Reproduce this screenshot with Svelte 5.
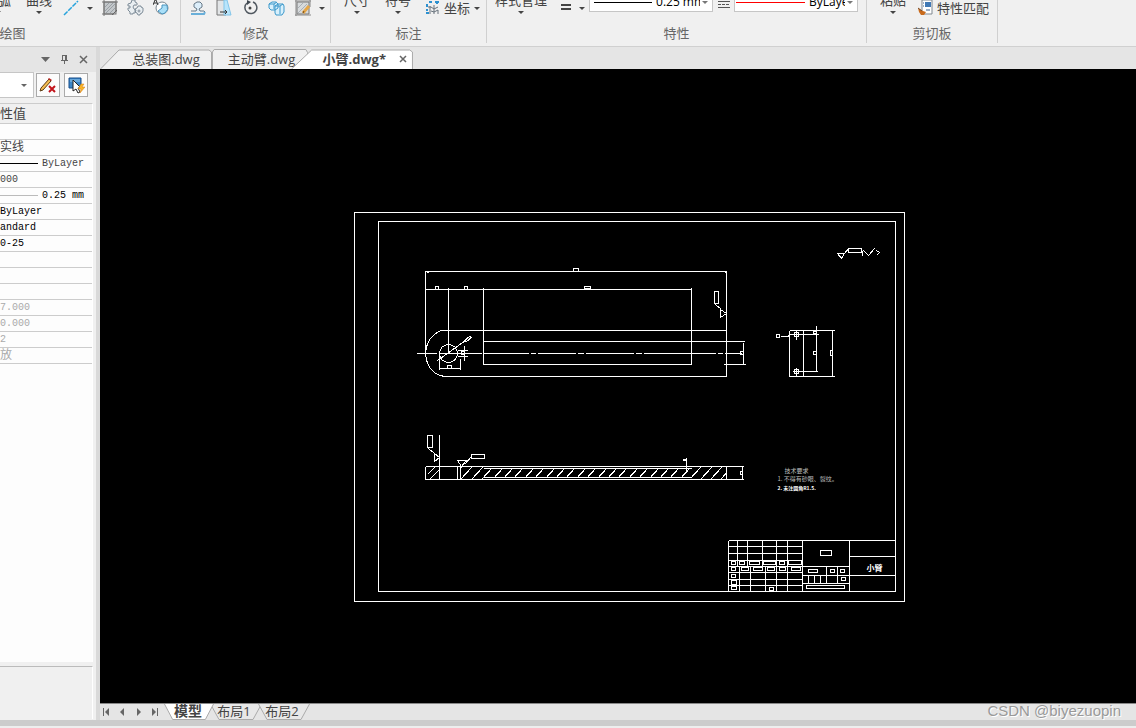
<script lang="ts">
  let activeDoc = $state('小臂.dwg*');
  let activeLayout = $state('模型');
  let lineWeight = $state('0.25 mm');
  let lineType = $state('ByLayer');

  const docs = ['总装图.dwg', '主动臂.dwg', '小臂.dwg*'];
  const layouts = ['模型', '布局1', '布局2'];

  const rows = [
    { value: '' },
    { value: '实线', kind: 'cjk' },
    { value: 'ByLayer', kind: 'line' },
    { value: '000' },
    { value: '0.25 mm', kind: 'line thick' },
    { value: 'ByLayer', kind: 'strong' },
    { value: 'andard', kind: 'strong' },
    { value: '0-25', kind: 'strong' },
    { value: '' },
    { value: '' },
    { value: '' },
    { value: '7.000', kind: 'readonly' },
    { value: '0.000', kind: 'readonly' },
    { value: '2', kind: 'readonly' },
    { value: '放', kind: 'readonly cjk' },
  ];

  // small label boxes: x, y, width, height
  const boxes = [
    [573, 268, 5, 3], [435, 286, 3, 3], [464, 286, 3, 3], [584, 286, 6, 2],
    [447, 365, 4, 3], [461, 351, 3, 3], [740, 351, 3, 3], [714, 291, 4, 12],
    [776, 334, 3, 3], [813, 331, 3, 2], [813, 351, 3, 3], [830, 350, 2, 5],
    [848, 248, 13, 4], [427, 435, 5, 12], [471, 454, 13, 4], [740, 471, 2, 3],
    [683, 459, 3, 1],
    [731, 561, 4, 3], [739, 561, 5, 3], [749, 561, 10, 3], [763, 561, 12, 3],
    [779, 561, 5, 3], [788, 560, 13, 4],
    [731, 567, 4, 3], [741, 567, 7, 3], [753, 567, 9, 3], [767, 567, 7, 3],
    [779, 567, 6, 3], [791, 567, 9, 3],
    [731, 574, 4, 3], [731, 580, 5, 4], [731, 586, 5, 3], [769, 587, 4, 3],
    [820, 550, 11, 5], [808, 569, 9, 3], [830, 569, 4, 3], [840, 569, 4, 3],
    [841, 577, 4, 3], [806, 585, 38, 3],
  ];

  const hatch = Array.from({ length: 27 }, (_, i) => 450 + Math.round(i * 10.4));
</script>

<div class="app">
  <header class="ribbon">
    <section class="group draw">
      <div class="tools">
        <button class="tall">圆弧<i class="caret"></i></button>
        <button class="tall">曲线<i class="caret"></i></button>
        <button class="tool" aria-label="line">
          <svg width="16" height="16" viewBox="0 0 16 16"><path d="M1 15 15 1" stroke="#28a3dc" stroke-width="1.5" stroke-dasharray="5 1" /></svg>
          <i class="caret"></i>
        </button>
        <button class="tool" aria-label="hatch">
          <svg width="16" height="16" viewBox="0 0 16 16">
            <rect x="2" y="2" width="12" height="12" fill="#c3c7ca" stroke="#777" />
            <path d="M3 7 7 3M3 11l8-8M4 13l9-9M8 13l5-5" stroke="#9aa0a5" />
            <path d="M0 2h16M2 0v16M14 0v12M0 14h12" stroke="#777" />
            <path d="m10 15 5-5" stroke="#666" />
          </svg>
        </button>
        <button class="tool" aria-label="block">
          <svg width="17" height="17" viewBox="0 0 17 17">
            <path d="M5 1h3v2l2 1v2H7l-1 2 1 2 2 1-1 3H6v1H3v-2L1 11V9h2V7H1V5l3-1zM11 7h3v1l2 1v3l-1 2-2 1v1h-2l-1-2-2-1v-3l2-1z" fill="#e9eef1" stroke="#7e8c98" />
            <circle cx="12" cy="12" r="1" fill="#fff" stroke="#7e8c98" />
            <path d="m8 7 2-2" stroke="#a8afb5" />
          </svg>
        </button>
        <button class="tool" aria-label="region">
          <svg width="16" height="17" viewBox="0 0 16 17">
            <circle cx="9" cy="9" r="6" fill="#fff" stroke="#7b8790" />
            <path d="M9 9V6h5q2 5-2 8l-3 1-4-3z" fill="#a9dff8" stroke="#4a94bd" />
            <path d="m0 6 2-5h1l2 5M1 4h3" fill="none" stroke="#333" />
          </svg>
        </button>
      </div>
      <h2>绘图</h2>
    </section>

    <section class="group modify">
      <div class="tools">
        <button class="tool" aria-label="stamp">
          <svg width="16" height="16" viewBox="0 0 16 16">
            <path d="M1 11h5l1-2-3-2V4l3-2h3l2 2v3l-3 2 1 2h4l1 1" fill="#dceefa" stroke="#667887" />
            <path d="M1 14h13l1-2" fill="none" stroke="#69afd9" stroke-width="2" />
          </svg>
        </button>
        <button class="tool" aria-label="stretch">
          <svg width="16" height="16" viewBox="0 0 16 16">
            <path d="M1 0v15h9V0z" fill="#e2e5e7" stroke="#777" />
            <path d="M8 0h3l4 15H8z" fill="#b9e5fb" stroke="#82c5e9" />
            <path d="M4 12h7M9 10l2 2-2 2" fill="none" stroke="#333" />
          </svg>
        </button>
        <button class="tool" aria-label="rotate">
          <svg width="16" height="17" viewBox="0 0 16 17">
            <path d="M5 4a6 6 0 1 0 6-1" fill="none" stroke="#505860" stroke-width="1.5" />
            <path d="m5 1 4 2-4 3z" fill="#404850" /><circle cx="8" cy="9" r="1.500" fill="#444" />
          </svg>
        </button>
        <button class="tool" aria-label="array">
          <svg width="17" height="16" viewBox="0 0 17 16" fill="#d8f0fc" stroke="#3b98cb">
            <path d="m1 4 3-2h4l2 2v4l-3 2H3L1 8zM1 4h5v5M6 4l3-2M7 6l3-2h5l1 2v6l-2 3H8l-1-2zM7 6h5l3-2M12 6v8" />
          </svg>
        </button>
        <button class="tool" aria-label="edit hatch">
          <svg width="16" height="16" viewBox="0 0 16 16">
            <path d="M2 2h12v12H2z" fill="#d7dadc" stroke="#777" />
            <path d="m3 8 5-5M3 13l9-9M8 13l5-5" stroke="#aab0b5" />
            <path d="M0 1h16M1 0v16M15 0v7M0 15h16" stroke="#888" />
            <path d="m8 13 6-7" stroke="#e5a647" stroke-width="3" /><path d="m8 13 1-2" stroke="#6c481c" />
          </svg>
          <i class="caret"></i>
        </button>
      </div>
      <h2>修改</h2>
    </section>

    <section class="group annotate">
      <div class="tools">
        <button class="tall">尺寸<i class="caret"></i></button>
        <button class="tall">符号<i class="caret"></i></button>
        <button class="tool text">
          <svg width="14" height="14" viewBox="0 0 14 14">
            <path d="M1 3v3M1 8v2M0 12h3M3 1h3M9 1h4M11 0v3" stroke="#2d91d0" stroke-width="2" />
            <path d="M4 5v8M2 6h3l3 2 4-2M8 4v9M5 10l3 1 4-2v4" fill="none" stroke="#68737c" />
          </svg>
          坐标<i class="caret"></i>
        </button>
      </div>
      <h2>标注</h2>
    </section>

    <section class="group props">
      <div class="tools">
        <button class="tall">样式管理<i class="caret"></i></button>
        <button class="tool weight" aria-label="line weight">
          <svg width="10" height="16" viewBox="0 0 10 16"><path d="M0 5h10M0 9h10" stroke="#444" stroke-width="2" shape-rendering="crispEdges" /></svg>
          <i class="caret"></i>
        </button>
        <div class="combo">
          <span class="sample"></span>
          <select aria-label="线宽" bind:value={lineWeight}><option>0.25 mm</option></select>
          <i class="caret"></i>
        </div>
        <svg class="linetype" width="12" height="16" viewBox="0 0 12 16" shape-rendering="crispEdges">
          <path d="M0 4.500h12M0 10.500h12" stroke="#555" />
          <path d="M0 7.500h12" stroke="#555" stroke-dasharray="3 1" />
          <path d="M0 1.500h12" stroke="#555" stroke-dasharray="2 1" />
        </svg>
        <div class="combo">
          <span class="sample red"></span>
          <select aria-label="线型" bind:value={lineType}><option>ByLayer</option></select>
          <i class="caret"></i>
        </div>
      </div>
      <h2>特性</h2>
    </section>

    <section class="group clipboard">
      <div class="tools">
        <button class="tall">粘贴<i class="caret"></i></button>
        <button class="tool text">
          <svg width="15" height="17" viewBox="0 0 15 17">
            <path d="M4 1h10v14H4z" fill="#fff" stroke="#7e8790" />
            <path d="M7 3h6v5H7z" fill="#3f78b5" /><path d="M5 4h1M5 7h1M8 11h4" stroke="#375f8d" />
            <path d="m0 9 5 3 3 1-2 3H3l-2-3z" fill="#c96b1d" /><path d="m0 9 4 3" stroke="#774a28" />
          </svg>
          特性匹配
        </button>
      </div>
      <h2>剪切板</h2>
    </section>
  </header>

  <div class="body">
    <aside class="palette">
      <div class="palette-title">
        <button aria-label="menu"><svg width="9" height="9" viewBox="0 0 9 9"><path d="M0 2h9L4.500 7z" fill="#666" /></svg></button>
        <button aria-label="pin"><svg width="9" height="11" viewBox="0 0 9 11" shape-rendering="crispEdges"><path d="M2 1h5v5H2zM5 1h2v5H5z" fill="#666" /><path d="M3 2h2v4H3z" fill="#e5e5e5" /><path d="M1 6h7v1H1zM4 7h1v3H4z" fill="#666" /></svg></button>
        <button aria-label="close"><svg width="9" height="9" viewBox="0 0 9 9"><path d="m1 1 7 7M8 1 1 8" stroke="#666" stroke-width="1.500" /></svg></button>
      </div>
      <div class="palette-tools">
        <select aria-label="选择"><option></option></select>
        <i class="caret"></i>
        <button aria-label="clear">
          <svg width="18" height="18" viewBox="0 0 18 18">
            <path d="m2 12 8-9 2 2-8 9-3 1z" fill="#f4bd50" stroke="#5c3b15" />
            <path d="m9 3 1-1 3 2-1 1z" fill="#c12323" />
            <path d="m10 10 6 6m0-6-6 6" stroke="#c2141b" stroke-width="2" />
          </svg>
        </button>
        <button aria-label="quick select">
          <svg width="18" height="18" viewBox="0 0 18 18">
            <path d="M2 2h12v10H2z" fill="#3a86c8" stroke="#164d89" /><path d="M3 3h10v3H3z" fill="#69a8db" />
            <path d="M6 4v11l3-2 2 4 2-1-2-4h3z" fill="#fff" stroke="#222" />
            <path d="m14 8-3 5h3l-1 4 5-6h-3l2-3z" fill="#f8b527" stroke="#d77c16" stroke-width=".5" />
          </svg>
        </button>
      </div>
      <div class="grid">
        <table>
          <thead><tr><th>特性值</th></tr></thead>
          <tbody>
            {#each rows as row}
              <tr><td class={row.kind}><span>{row.value}</span></td></tr>
            {/each}
          </tbody>
        </table>
      </div>
      <div class="hint"></div>
    </aside>
    <div class="splitter"></div>

    <main class="editor">
      <nav class="docs">
        {#each docs as doc, i}
          <div class="doc doc{i}" class:active={doc === activeDoc}>
            <svg class="shape" viewBox="0 0 112 20" preserveAspectRatio="none">
              {#if i === 1}
                <path d="M.5 20V3l2-2.500h107l2 3V20" />
              {:else}
                <path d="M.5 20 19 1h90l2.500 2V20" />
              {/if}
            </svg>
            <button onclick={() => (activeDoc = doc)}>{doc}</button>
            {#if doc === activeDoc}
              <button class="close" aria-label="close">
                <svg width="8" height="8" viewBox="0 0 8 8"><path d="m1 1 6 6M7 1 1 7" stroke="#666" stroke-width="1.500" /></svg>
              </button>
            {/if}
          </div>
        {/each}
      </nav>

      <div class="canvas">
        <!-- half unit origin keeps one pixel strokes on whole pixels -->
        <svg viewBox="99.5 68.5 1036 634">
          <defs>
            <clipPath id="section">
              <path d="M460 466h23v2h208v-2h35v13h-35v-2H483v2h-23z" />
            </clipPath>
          </defs>
          <g class="lines">
            <!-- sheet -->
            <path d="M354 212h550v389H354zM378 221h517v370H378z" />
            <!-- front view -->
            <path d="M425 270v83M425 271h301M726 270v106M425 289h266M448 287v66M483 287v77M691 287v77" />
            <path d="M443 330h283M448 376h278M483 341h261M483 364h208M723 364h22" />
            <path d="M443 330h-3l-3 2-2 1-5 5-3 5-1 4-1 6 1 6 1 4 3 5 5 5 5 2 4 1h4" />
            <path d="M416 353h20M438 353h43M483 353h45M530 353h5M537 353h38M577 353h6M585 353h48M635 353h6M643 353h72M717 353h5M724 353h17" />
            <circle cx="448" cy="353" r="9" />
            <path d="m437 360 28-20M464 340l5-4 2 1-5 4zM439 353v16M460 358v11M439 368h21M464 345v15M457 350h10M457 356h10M743 342v22" />
            <path d="M714 290v12M715 304l6 5M720 309v8l6-4zM426 272h2M724 272h2" />
            <!-- end view -->
            <path d="M789 330h45M789 330v46h45M803 330v46M832 330v46M816 325v46M789 334h29M793 371h24M780 336h7l2-1" />
            <path d="M796 330v9M792 334h9M796 367v9M792 371h9M794 332h4v4h-4zM794 369h4v4h-4z" />
            <path d="M837 253h7l-3 5zM844 253l4-5M862 250v5M863 250l5 5 6-7M876 250l3 2-3 3" />
            <!-- section view -->
            <path d="M425 466h318M425 479h318M425 466v13M439 434v45M457 466v13M460 466v13M726 466v13M483 468h208M483 477h208M742 466v13" />
            <path d="M427 434v4M428 448l6 5M434 453v8l5-4zM457 460h9l-5 6zM464 464l7-8M686 457v15" />
            <path d="m427 474 8-8M429 479l10-10" />
            <g clip-path="url(#section)">
              {#each hatch as x}
                <path d="M{x} 479l12-13" />
              {/each}
            </g>
            <!-- title block -->
            <path d="M728 540h167M728 540v51M802 540v51M849 540v51M728 546h74M728 553h74M728 560h74M728 566h121M728 572h74M728 579h74M728 585h74" />
            <path d="M737 540v26M747 540v26M762 540v26M776 540v26M787 540v26M739 566v25M750 566v25M765 566v25M776 566v25M787 566v25" />
            <path d="M802 575h47M802 583h47M808 575v8M814 575v8M820 575v8M826 566v17M837 566v17M849 556h46M849 575h46" />
            {#each boxes as [x, y, w, h]}
              <rect {x} {y} width={w} height={h} />
            {/each}
          </g>
          <g class="notes">
            <text x="784" y="472">技术要求</text>
            <text x="777" y="480">1. 不得有砂眼、裂纹。</text>
            <text class="bright" x="777" y="489">2. 未注圆角R1.5.</text>
            <text class="name" x="866" y="570">小臂</text>
          </g>
        </svg>
      </div>

      <nav class="layouts">
        <div class="pager">
          <button aria-label="first"><svg width="7" height="8" viewBox="0 0 7 8"><path d="M0 0h1v8H0zM6 0v8L2 4z" /></svg></button>
          <button aria-label="previous"><svg width="7" height="8" viewBox="0 0 7 8"><path d="M5 0v8L1 4z" /></svg></button>
          <button aria-label="next"><svg width="7" height="8" viewBox="0 0 7 8"><path d="M2 0v8l4-4z" /></svg></button>
          <button aria-label="last"><svg width="7" height="8" viewBox="0 0 7 8"><path d="M6 0h1v8H6zM1 0v8l4-4z" /></svg></button>
        </div>
        {#each layouts as layout}
          <button class="layout" class:active={layout === activeLayout} onclick={() => (activeLayout = layout)}>
            <svg class="shape" viewBox="0 0 52 17" preserveAspectRatio="none"><path d="M.5 0 9 16.500h34L51.500 0" /></svg>
            <span>{layout}</span>
          </button>
        {/each}
        <span class="watermark">CSDN @biyezuopin</span>
      </nav>
    </main>
  </div>
  <footer></footer>
</div>

<style>
  :global(body) {
    overflow: hidden;
  }

  .app {
    display: flex;
    flex-direction: column;
    height: 100vh;
    background: #e5e5e5;
    color: #444;
    font-family: 'Open Sans', 'Noto Sans CJK SC', sans-serif;
    font-size: 13px;
    line-height: 16px;
  }

  button {
    display: flex;
    align-items: center;
    padding: 0;
    border: none;
    background: none;
    color: inherit;
    font: inherit;
    white-space: nowrap;
  }

  svg {
    display: block;
    flex: none;
  }

  .shape,
  .lines {
    fill: none;
  }

  select {
    appearance: none;
    padding: 0;
    border: none;
    background: none;
    font: inherit;
  }

  .caret {
    flex: none;
    border: 3px solid transparent;
    border-top-color: #444;
    border-bottom: none;
  }

  .ribbon {
    display: flex;
    align-items: flex-end;
    flex: none;
    box-sizing: border-box;
    height: 47px;
    overflow: hidden;
    border-bottom: 1px solid #d0d0d0;
    background: #f0f0f0;
  }

  .group {
    flex: none;
    box-sizing: border-box;
    padding-bottom: 1px;
    margin-bottom: 3px;
    border-right: 1px solid #d0d0d0;
  }

  .group h2 {
    margin: 8px 0 0;
    color: #666;
    font-size: 13px;
    font-weight: normal;
    line-height: 18px;
    text-align: center;
  }

  .tools {
    display: flex;
    align-items: flex-end;
    height: 26px;
  }

  /* the first group starts left of the window */
  .draw {
    width: 336px;
    margin-left: -155px;
  }

  .draw .tools {
    justify-content: flex-end;
    gap: 9px;
    padding-right: 11px;
  }

  .draw .tall {
    margin-right: 2px;
  }

  .draw .tall:first-child {
    margin-right: 6px;
  }

  .modify {
    width: 150px;
  }

  .modify .tools {
    gap: 10px;
    padding-left: 9px;
  }

  .annotate {
    width: 156px;
  }

  .annotate .tools {
    gap: 15px;
    padding-left: 13px;
  }

  .props {
    width: 380px;
  }

  .props .tools {
    gap: 6px;
    padding-left: 8px;
  }

  .clipboard {
    width: 131px;
  }

  .clipboard .tools {
    gap: 12px;
    padding-left: 13px;
  }

  .tall {
    flex-direction: column;
    gap: 3px;
    padding-bottom: 2px;
  }

  .tool {
    gap: 8px;
  }

  .tool.text {
    gap: 4px;
  }

  .weight {
    margin-left: 8px;
  }

  .props .combo,
  .linetype {
    margin-bottom: 3px;
  }

  .linetype {
    margin-left: -1px;
  }

  .combo {
    display: flex;
    align-items: center;
    box-sizing: border-box;
    width: 124px;
    height: 22px;
    margin-left: -2px;
    padding: 0 4px 0 1px;
    border: 1px solid #c6c6c6;
    background: #fff;
    color: #000;
    font-size: 12px;
  }

  .sample {
    flex: 1;
    height: 1px;
    margin: 0 4px 0 3px;
    background: #000;
  }

  .sample.red {
    margin-left: 0;
    background: #f00;
  }

  .combo select {
    width: 44px;
    margin-right: 2px;
    overflow: hidden;
    color: #000;
    text-overflow: clip;
  }

  .combo .red + select {
    width: 36px;
  }

  .combo .caret {
    border-top-color: #777;
  }

  .props .combo {
    height: 20px;
    margin-bottom: 4px;
  }

  .body {
    display: flex;
    flex: 1;
    min-height: 0;
  }

  .palette {
    display: flex;
    flex-direction: column;
    flex: none;
    width: 96px;
    background: #f0f0f0;
  }

  .palette-title {
    display: flex;
    justify-content: flex-end;
    align-items: center;
    gap: 10px;
    height: 25px;
    padding-right: 8px;
    background: #e5e5e5;
  }

  .palette-tools {
    display: flex;
    align-items: center;
    gap: 4px;
    height: 26px;
    margin-bottom: 5px;
  }

  .palette-tools select {
    box-sizing: border-box;
    width: 34px;
    height: 26px;
    margin-right: -17px;
    border: 1px solid #c6c6c6;
    border-left: none;
    background: #fff;
  }

  .palette-tools .caret {
    z-index: 1;
    margin-right: 5px;
    border-top-color: #666;
  }

  .palette-tools button {
    justify-content: center;
    box-sizing: border-box;
    width: 24px;
    height: 24px;
    border: 1px solid #aaa;
    background: #fcfcfc;
  }

  .grid {
    flex: 1;
    min-height: 0;
    margin-right: 3px;
    border-top: 1px solid #ccc;
    border-right: 1px solid #fff;
    background: #fdfdfd;
  }

  table {
    width: 100%;
    border-collapse: collapse;
    table-layout: fixed;
    color: #444;
    font-family: 'Liberation Mono', 'Noto Sans CJK SC', monospace;
    font-size: 10px;
    line-height: 15px;
  }

  th {
    height: 17px;
    padding: 2px 0 0;
    overflow: hidden;
    border-bottom: 1px solid #ccc;
    background: #f0f0f0;
    font-size: 13px;
    font-weight: normal;
    text-align: left;
    text-indent: -13px;
  }

  td {
    height: 15px;
    padding: 0;
    border-bottom: 1px solid #ccc;
    white-space: nowrap;
  }

  td span {
    display: block;
  }

  .cjk {
    height: 14px;
    padding-top: 1px;
    font-size: 12px;
    line-height: 14px;
  }

  .strong {
    color: #000;
  }

  .readonly {
    color: #aaa;
  }

  .line span {
    display: flex;
    align-items: center;
    gap: 4px;
    padding-right: 8px;
  }

  .line span::before {
    content: '';
    flex: 1;
    height: 1px;
    background: #000;
  }

  .thick span {
    color: #000;
  }

  .thick span::before {
    background: #bbb;
  }

  .hint {
    height: 52px;
    margin: 4px 3px 1px 0;
    border-top: 1px solid #bbb;
    border-right: 1px solid #fff;
  }

  .splitter {
    flex: none;
    width: 4px;
    background: #d9d9d9;
  }

  .editor {
    display: flex;
    flex-direction: column;
    flex: 1;
    min-width: 0;
  }

  .docs {
    display: flex;
    align-items: flex-end;
    flex: none;
    height: 22px;
  }

  .doc {
    position: relative;
    display: flex;
    justify-content: center;
    align-items: center;
    box-sizing: border-box;
    width: 112px;
    height: 20px;
    padding-left: 20px;
  }

  .doc1 {
    width: 96px;
    padding-left: 3px;
  }

  .doc2 {
    justify-content: flex-end;
    gap: 13px;
    width: 122px;
    margin-left: -17px;
    padding: 0 6px 0 0;
  }

  .shape {
    position: absolute;
    inset: 0;
    width: 100%;
    height: 100%;
    fill: #f0f0f0;
    stroke: #aaa;
  }

  .shape path {
    vector-effect: non-scaling-stroke;
  }

  .doc button {
    position: relative;
  }

  .active {
    font-weight: bold;
  }

  .active .shape {
    fill: #fff;
  }

  .canvas {
    flex: 1;
    min-height: 0;
    background: #000;
  }

  .canvas svg {
    width: 100%;
    height: 100%;
  }

  .lines {
    stroke: #fff;
    shape-rendering: crispEdges;
  }

  .notes {
    fill: #bbb;
    font-family: 'Noto Sans CJK SC', sans-serif;
    font-size: 6px;
  }

  .notes .bright {
    fill: #fff;
    font-size: 5px;
    font-weight: bold;
  }

  .notes .name {
    fill: #fff;
    font-size: 8px;
    font-weight: bold;
  }

  .layouts {
    display: flex;
    align-items: center;
    flex: none;
    box-sizing: border-box;
    height: 17px;
    border-top: 1px solid #888;
  }

  .pager {
    display: flex;
    gap: 9px;
    padding: 0 6px 0 3px;
  }

  .pager svg {
    fill: #666;
  }

  .layout {
    position: relative;
    justify-content: center;
    box-sizing: border-box;
    width: 52px;
    height: 16px;
    margin-right: -4px;
    padding: 0 4px 2px 0;
  }

  .layout .shape {
    fill: #e8e8e8;
  }

  .layout.active {
    z-index: 1;
    width: 50px;
    padding-right: 2px;
    font-size: 14px;
  }

  .layout.active .shape {
    fill: #fff;
  }

  .layout span {
    position: relative;
  }

  .watermark {
    margin-left: auto;
    padding: 0 15px 2px 0;
    color: #999;
    font-family: 'Liberation Sans', sans-serif;
    font-size: 15px;
    text-shadow: 1px 1px 0 #fff;
  }

  footer {
    flex: none;
    height: 6px;
    border-bottom: 2px solid #eee;
    background: #ccc;
  }
</style>
